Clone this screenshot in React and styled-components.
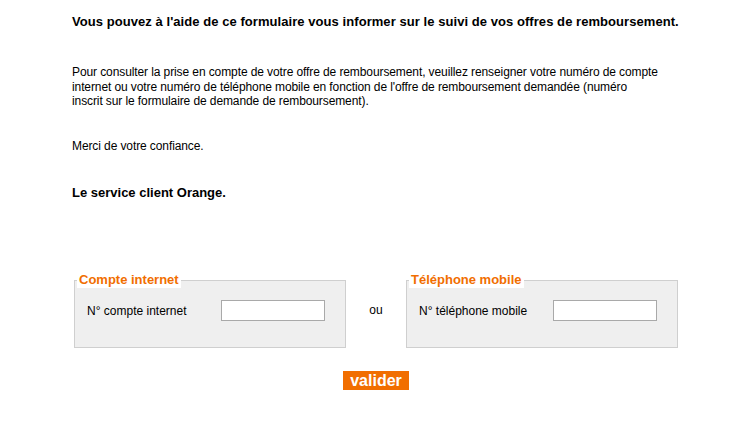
import React from "react";
import styled, { createGlobalStyle } from "styled-components";

const GlobalStyle = createGlobalStyle`
  body {
    margin: 0;
    background: #fff;
    font-family: "Liberation Sans", Arial, sans-serif;
    color: #000;
  }
`;

const Page = styled.div`
  width: 608px;
  padding: 14px 0 0 72px;
`;

const Lead = styled.p`
  margin: 0;
  font-size: 13px;
  line-height: 16px;
  font-weight: bold;
  white-space: nowrap;
  letter-spacing: ${({ $spread }) => ($spread ? "0.06px" : "0")};
`;

const Text = styled.p`
  margin: ${({ $top }) => $top || 0}px 0 0;
  font-size: 12px;
  line-height: 14.5px;
  letter-spacing: -0.1px;
  white-space: nowrap;
`;

const Signature = styled(Lead)`
  margin-top: 32px;
`;

const Forms = styled.div`
  display: flex;
  align-items: flex-start;
  margin-top: 71px;
`;

const Box = styled.fieldset`
  margin: 0 2px;
  padding: 0;
  width: 272px;
  box-sizing: border-box;
  border: 1px solid #cfcfcf;
  background: #efefef;
  min-width: 0;
`;

const Legend = styled.legend`
  margin-left: 2px;
  padding: 0 2px;
  font-size: 13px;
  line-height: 16px;
  font-weight: bold;
  color: #f16e00;
  background: #fff;
`;

const Field = styled.div`
  display: flex;
  align-items: center;
  padding: 12px 0 26px 12px;
`;

const Label = styled.label`
  width: 134px;
  font-size: 12px;
`;

const Input = styled.input`
  width: 104px;
  height: 21px;
  box-sizing: border-box;
  margin: 0;
  padding: 0 3px;
  border: 1px solid #a9a9a9;
  background: #fff;
`;

const Or = styled.span`
  flex: 0 0 56px;
  text-align: center;
  font-size: 12px;
  line-height: 16px;
  margin-top: 30px;
`;

const Actions = styled.div`
  display: flex;
  justify-content: center;
  margin-top: 23px;
`;

const Submit = styled.button`
  height: 19px;
  width: 66px;
  padding: 0;
  border: none;
  background: #f16e00;
  color: #fff;
  font-family: "Liberation Sans", Arial, sans-serif;
  font-size: 16px;
  font-weight: bold;
  line-height: 19px;
  cursor: pointer;
`;

const FormBox = ({ title, label }) => (
  <Box>
    <Legend>{title}</Legend>
    <Field>
      <Label>{label}</Label>
      <Input type="text" />
    </Field>
  </Box>
);

export default function App() {
  return (
    <>
      <GlobalStyle />
      <Page>
        <Lead $spread>
          Vous pouvez à l'aide de ce formulaire vous informer sur le suivi de vos offres de remboursement.
        </Lead>
        <Text $top={35}>
          Pour consulter la prise en compte de votre offre de remboursement, veuillez renseigner votre numéro de compte
          <br />
          internet ou votre numéro de téléphone mobile en fonction de l'offre de remboursement demandée (numéro
          <br />
          inscrit sur le formulaire de demande de remboursement).
        </Text>
        <Text $top={30}>Merci de votre confiance.</Text>
        <Signature>Le service client Orange.</Signature>
        <Forms>
          <FormBox title="Compte internet" label="N° compte internet" />
          <Or>ou</Or>
          <FormBox title="Téléphone mobile" label="N° téléphone mobile" />
        </Forms>
        <Actions>
          <Submit type="button">valider</Submit>
        </Actions>
      </Page>
    </>
  );
}
